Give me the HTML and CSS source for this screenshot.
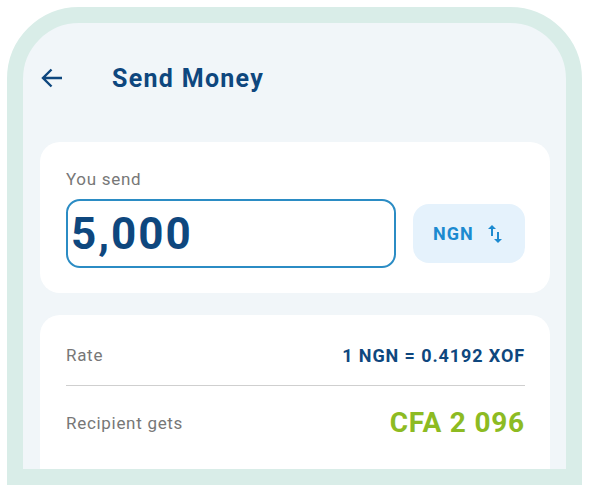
FILE: index.html
```html
<!DOCTYPE html>
<html lang="en">
<head>
<meta charset="utf-8">
<title>Send Money</title>
<link rel="stylesheet" href="styles.css">
</head>
<body>
<div class="frame">
  <div class="screen">
    <header class="topbar">
      <svg class="back" width="22" height="20" viewBox="0 0 22 20" aria-hidden="true">
        <path d="M21 10H2.2M10.5 1.5L2 10l8.5 8.5" fill="none" stroke="#0e477e" stroke-width="2.4" stroke-linecap="butt" stroke-linejoin="miter"/>
      </svg>
      <h1 class="title">Send Money</h1>
    </header>

    <section class="card send-card">
      <div class="label">You send</div>
      <div class="send-row">
        <div class="amount">5,000</div>
        <button class="currency">
          <span>NGN</span>
          <svg width="24" height="24" viewBox="0 0 24 24" aria-hidden="true">
            <path d="M16 17.01V10h-2v7.01h-3L15 21l4-3.99h-3zM9 3L5 6.99h3V14h2V6.99h3L9 3z" fill="#1c8ad0"/>
          </svg>
        </button>
      </div>
    </section>

    <section class="card info-card">
      <div class="row rate-row">
        <span class="label">Rate</span>
        <span class="rate">1 NGN = 0.4192 XOF</span>
      </div>
      <div class="divider"></div>
      <div class="row gets-row">
        <span class="label">Recipient gets</span>
        <span class="gets">CFA 2 096</span>
      </div>
    </section>
  </div>
</div>
</body>
</html>
```

FILE: styles.css
```css
* { box-sizing: border-box; }

html, body {
  margin: 0;
  padding: 0;
  background: #ffffff;
  font-family: Roboto, "Liberation Sans", sans-serif;
}

.frame {
  margin: 7px 0 0 7px;
  width: 575px;
  height: 478px;
  border: 16px solid #d9ede8;
  border-radius: 72px 72px 0 0;
  background: #f1f6f9;
  overflow: hidden;
}

.screen {
  padding: 27px 16px 0 17px;
  display: flex;
  flex-direction: column;
}

.topbar {
  height: 56px;
  display: flex;
  align-items: center;
  padding-left: 1px;
}

.back {
  display: block;
  flex: none;
}

.title {
  margin: 0 0 0 49px;
  font-size: 25px;
  font-weight: 700;
  color: #0e477e;
  letter-spacing: 1.3px;
}

.card {
  background: #ffffff;
  border-radius: 20px;
  padding: 0 25px 0 26px;
}

.send-card {
  margin-top: 36px;
  padding-top: 27px;
  padding-bottom: 25px;
}

.label {
  font-size: 17px;
  line-height: 20px;
  color: #777777;
  letter-spacing: 0.7px;
}

.send-row {
  margin-top: 10px;
  display: flex;
  align-items: center;
  gap: 17px;
}

.amount {
  width: 330px;
  height: 69px;
  border: 2px solid #2b8cc4;
  border-radius: 14px;
  padding: 0 3px;
  display: flex;
  align-items: center;
  font-size: 44px;
  font-weight: 700;
  color: #0e477e;
  letter-spacing: 2px;
}

.currency {
  width: 112px;
  height: 59px;
  border: none;
  border-radius: 16px;
  background: #e5f2fc;
  padding: 0 0 0 20px;
  display: flex;
  align-items: center;
  gap: 9px;
  font-family: inherit;
  font-size: 18px;
  font-weight: 700;
  color: #1c8ad0;
  letter-spacing: 1px;
}

.currency svg { display: block; flex: none; }

.info-card {
  margin-top: 22px;
  height: 200px;
}

.row {
  display: flex;
  align-items: center;
  justify-content: space-between;
}

.rate-row {
  padding-top: 28px;
  padding-bottom: 18px;
  height: 70px;
}

.rate {
  font-size: 18px;
  font-weight: 700;
  color: #0e477e;
  letter-spacing: 0.9px;
}

.divider {
  height: 1px;
  background: #cfcfcf;
}

.gets-row {
  padding-top: 20px;
  height: 54px;
}

.gets {
  font-size: 28px;
  line-height: 34px;
  font-weight: 700;
  color: #8dbb22;
  letter-spacing: 0.8px;
}
```
